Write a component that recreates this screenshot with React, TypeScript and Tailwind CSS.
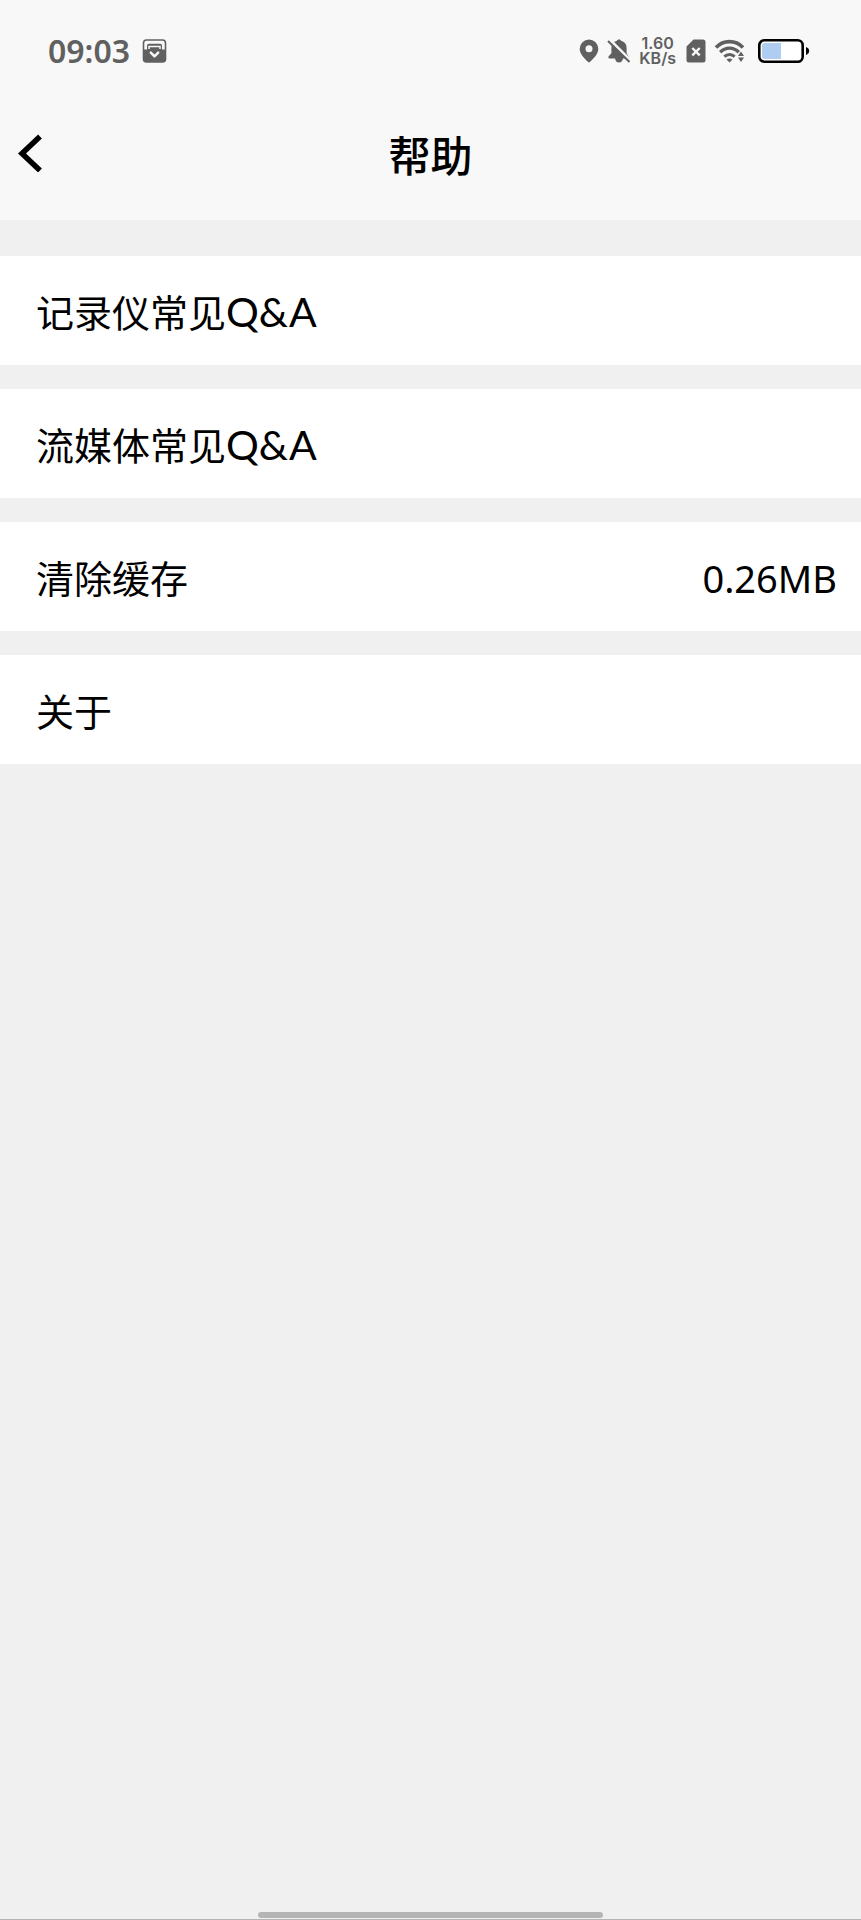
const FONT = "font-['Noto_Sans','Noto_Sans_CJK_SC',sans-serif]";

const ROWS = [
  { name: "记录仪常见", suffix: "Q&A", href: "#recorder" },
  { name: "流媒体常见", suffix: "Q&A", href: "#stream" },
  { name: "清除缓存", value: "0.26MB" },
  { name: "关于", href: "#about" },
];

const StatusBar = () => (
  <div className="flex items-center justify-between h-[102px] pl-12 pr-[51px] text-[#606060]">
    <div className="flex items-center gap-3">
      <span className="text-[32px] leading-8 font-semibold">09:03</span>
      <svg width="25" height="24" viewBox="0 0 24 24" fill="none">
        <rect x="1" y="1" width="22" height="22" rx="3" stroke="currentColor" strokeWidth="1.6" />
        <path d="M1 10.500h3.500V6.500a1.800 1.800 0 0 1 1.800-1.800h11.400a1.800 1.800 0 0 1 1.800 1.800v4H23V20a3 3 0 0 1-3 3H4a3 3 0 0 1-3-3z" fill="currentColor" />
        <path d="M6.500 10V7.400h11V10" stroke="#f8f8f8" strokeWidth="1.5" />
        <path d="m8.300 13.600 3.700 3.800 3.700-3.800" stroke="#f8f8f8" strokeWidth="2.4" strokeLinecap="round" strokeLinejoin="round" />
      </svg>
    </div>

    <div className="flex items-center">
      {/* Location */}
      <svg width="20" height="24" viewBox="0 0 20 24" fill="currentColor">
        <path fillRule="evenodd" d="M10 .5a9.300 9.300 0 0 0-9.300 9.300c0 5.400 4.600 9.400 8.200 13a1.500 1.500 0 0 0 2.200 0c3.600-3.600 8.200-7.600 8.200-13A9.300 9.300 0 0 0 10 .5m0 5.700a3.500 3.500 0 1 1 0 7 3.500 3.500 0 0 1 0-7" />
      </svg>
      {/* Muted bell */}
      <svg className="ml-2" width="24" height="24" viewBox="0 0 24 24" fill="none">
        <path d="M12 .5c1.200 0 1.800.6 2 1.300 3.600.8 5.600 3.300 5.600 7.200v5.300l2 3.300c.3.8 0 1.900-1 1.900H2.500c-1 0-1.400-1.100-1-1.900L4.400 14.300V9C4.400 5.100 6.400 2.600 10 1.800c.2-.7.8-1.300 2-1.300" fill="currentColor" />
        <path d="M8 19h8c-.3 3-1.700 4.500-4 4.500S8.300 22 8 19" fill="currentColor" />
        <path d="m2.500.5 21 21" stroke="#f8f8f8" strokeWidth="3" />
        <path d="m1 2 21.500 21" stroke="currentColor" strokeWidth="2" />
      </svg>
      <span className="ml-2 whitespace-pre-line text-center text-[16px] leading-[15px] font-semibold font-['Inter',sans-serif]">
        {"1.60\nKB/s"}
      </span>
      {/* Missing SIM */}
      <svg className="ml-2.5" width="20" height="24" viewBox="0 0 20 24" fill="none">
        <path d="M7.500.5H17a2.500 2.500 0 0 1 2.500 2.500v18a2.500 2.500 0 0 1-2.500 2.500H3A2.500 2.500 0 0 1 .5 21V7.500z" fill="currentColor" />
        <path d="m6.300 9 7.400 7.400m0-7.400-7.400 7.400" stroke="#f8f8f8" strokeWidth="2.4" />
      </svg>
      {/* Wi-Fi with traffic arrows */}
      <svg className="ml-2" width="32" height="24" viewBox="0 0 32 24" fill="none">
        <path d="M2 8.500C9.500.7 21.500.7 29 8.500" stroke="currentColor" strokeWidth="3.6" />
        <path d="M6.200 13.200c5.300-5.400 13.300-5.400 18.600 0" stroke="currentColor" strokeWidth="3.4" />
        <path d="M10.300 17.600c3-2.800 7.400-2.800 10.400 0" stroke="currentColor" strokeWidth="3" />
        <path d="M12.500 20.500c1.800-1.500 4.200-1.500 6 0l-3 3z" fill="currentColor" />
        <path d="m27 12.500 3 4.500h-6zm0 10.500 3-4.500h-6z" fill="currentColor" />
      </svg>
      {/* Battery */}
      <svg className="ml-3" width="52" height="24" viewBox="0 0 52 24" fill="none">
        <rect x="1.300" y="1.300" width="43.400" height="21.400" rx="5" fill="#fff" stroke="#000" strokeWidth="2.6" />
        <path d="M6.500 4H23v16H6.500A2.500 2.500 0 0 1 4 17.500v-11A2.500 2.500 0 0 1 6.500 4" fill="#afcdf0" />
        <path d="M48 8c2 .8 3.200 2.200 3.200 4S50 15.200 48 16z" fill="#000" />
      </svg>
    </div>
  </div>
);

const Header = () => (
  <header className="bg-[#f8f8f8]">
    <StatusBar />
    <div className="grid grid-cols-[1fr_auto_1fr] items-start h-[118px] px-4 pt-6">
      <button type="button" aria-label="返回" className="flex items-center w-12 h-[54px]">
        <svg width="28" height="38" viewBox="0 0 28 38" fill="none">
          <path d="M24 2.500 6 19.500l18 17" stroke="#000" strokeWidth="5.5" />
        </svg>
      </button>
      <h1 className="text-[42px] leading-[60px] font-medium text-black">帮助</h1>
    </div>
  </header>
);

const ROW_CLASS =
  "flex items-center justify-between w-full h-[109px] pt-0.5 pl-9 pr-6 bg-white text-[38px] leading-[56px] text-black text-left";

const App = () => {
  return (
    <div className={`min-h-screen bg-[#f0f0f0] ${FONT}`} lang="zh-CN">
      <Header />

      <main className="flex flex-col gap-6 pt-9">
        {ROWS.map((row) =>
          row.href ? (
            <a key={row.name} href={row.href} className={ROW_CLASS}>
              <span>
                {row.name}
                {row.suffix && (
                  <span className="font-['Lato',sans-serif] text-[41px]">{row.suffix}</span>
                )}
              </span>
            </a>
          ) : (
            <button key={row.name} type="button" className={ROW_CLASS}>
              <span>{row.name}</span>
              <span>{row.value}</span>
            </button>
          )
        )}
      </main>

      {/* Gesture bar */}
      <div className="fixed inset-x-0 bottom-0 flex justify-center pb-px border-b border-[#b5b5b5]">
        <div className="w-2/5 h-1.5 rounded-full bg-[#b5b5b5]" />
      </div>
    </div>
  );
};

export default App;
